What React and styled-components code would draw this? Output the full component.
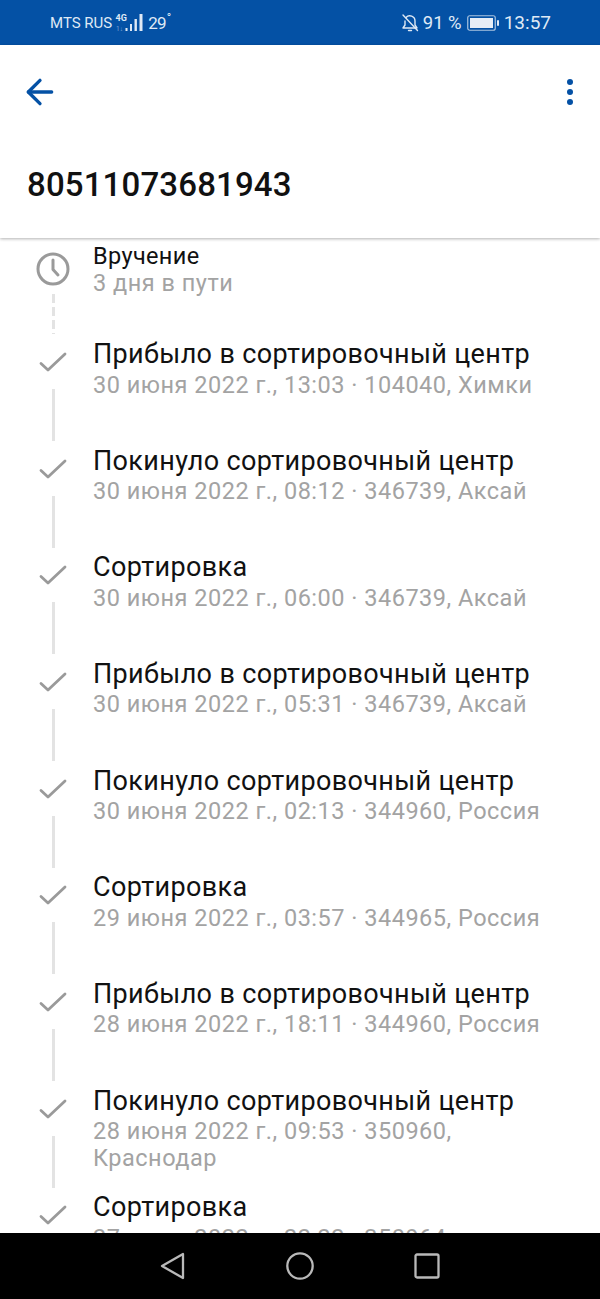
import React from "react";
import styled, { createGlobalStyle } from "styled-components";
import { ArrowLeft } from "lucide-react";

const GlobalStyle = createGlobalStyle`
  html, body {
    margin: 0;
    padding: 0;
    background: #fff;
    font-family: Roboto, "Liberation Sans", sans-serif;
  }
`;

const BLUE = "#0451a5";

const Screen = styled.div`
  width: 600px;
  height: 1299px;
  display: flex;
  flex-direction: column;
  overflow: hidden;
`;

const StatusBar = styled.div`
  height: 45px;
  flex: none;
  background: ${BLUE};
  color: #dfe9f5;
  display: flex;
  align-items: center;
  justify-content: space-between;
  padding: 0 49px 0 50px;
  box-sizing: border-box;
`;

const StatusGroup = styled.div`
  display: flex;
  align-items: center;
`;

const Carrier = styled.span`
  font-size: 15px;
  margin-right: 3px;
`;

const Temperature = styled.span`
  font-size: 17px;
  letter-spacing: -0.8px;
  margin-left: 3px;
  sup {
    font-size: 12px;
    line-height: 0;
    margin-left: 1px;
  }
`;

const Percent = styled.span`
  font-size: 18.5px;
  margin: 0 5px 0 4px;
`;

const Clock = styled.span`
  font-size: 19px;
  margin-left: 5px;
`;

const Header = styled.header`
  height: 193px;
  flex: none;
  background: #fff;
  box-shadow: 0 1px 3px rgba(0, 0, 0, 0.3);
  position: relative;
  z-index: 1;
  box-sizing: border-box;
  padding: 27px 27px 0 20px;
`;

const HeaderTools = styled.div`
  display: flex;
  align-items: center;
  justify-content: space-between;
  color: ${BLUE};
`;

const Dots = styled.div`
  display: flex;
  flex-direction: column;
  gap: 3.5px;
  span {
    width: 6.5px;
    height: 6.5px;
    border-radius: 50%;
    background: ${BLUE};
  }
`;

const TrackNumber = styled.h1`
  margin: 53px 0 0 7px;
  font-size: 33px;
  line-height: 40px;
  font-weight: 500;
  letter-spacing: 0.15px;
  color: #111;
`;

const Timeline = styled.main`
  flex: 1;
  min-height: 0;
  overflow: hidden;
  background: #fff;
  padding-top: 3px;
`;

const Row = styled.div`
  display: flex;
  height: ${(p) => (p.$first ? "98px" : "106.67px")};
  padding-left: 36px;
`;

const Marker = styled.div`
  width: 34px;
  margin-right: 23px;
  flex: none;
  display: flex;
  flex-direction: column;
  align-items: center;
`;

const IconSlot = styled.div`
  margin-top: ${(p) => (p.$clock ? "12px" : "7px")};
  height: 32px;
  display: flex;
  align-items: center;
`;

const Line = styled.div`
  width: 3px;
  height: 52px;
  margin-top: 11px;
  background: #e3e3e3;
`;

const DashedLine = styled.div`
  width: 3px;
  height: 40px;
  margin-top: 9px;
  background: repeating-linear-gradient(
    to bottom,
    #e3e3e3 0,
    #e3e3e3 9px,
    transparent 9px,
    transparent 13px
  );
`;

const Texts = styled.div`
  min-width: 0;
  flex: 1;
  padding-right: 40px;
`;

const Title = styled.div`
  font-size: ${(p) => (p.$small ? "23.5px" : "27px")};
  line-height: 30px;
  letter-spacing: 0.35px;
  color: #111;
  white-space: nowrap;
`;

const Subtitle = styled.div`
  font-size: 23.5px;
  line-height: 27px;
  letter-spacing: 0.5px;
  color: #a3a3a3;
  margin-top: ${(p) => (p.$tight ? "-1px" : "2.5px")};
`;

const NavBar = styled.nav`
  height: 66px;
  flex: none;
  background: #000;
  display: flex;
  align-items: center;
  justify-content: center;
  gap: 100px;
  position: relative;
  z-index: 2;
`;

const steps = [
  { title: "Прибыло в сортировочный центр", sub: "30 июня 2022 г., 13:03 · 104040, Химки" },
  { title: "Покинуло сортировочный центр", sub: "30 июня 2022 г., 08:12 · 346739, Аксай" },
  { title: "Сортировка", sub: "30 июня 2022 г., 06:00 · 346739, Аксай" },
  { title: "Прибыло в сортировочный центр", sub: "30 июня 2022 г., 05:31 · 346739, Аксай" },
  { title: "Покинуло сортировочный центр", sub: "30 июня 2022 г., 02:13 · 344960, Россия" },
  { title: "Сортировка", sub: "29 июня 2022 г., 03:57 · 344965, Россия" },
  { title: "Прибыло в сортировочный центр", sub: "28 июня 2022 г., 18:11 · 344960, Россия" },
  { title: "Покинуло сортировочный центр", sub: "28 июня 2022 г., 09:53 · 350960, Краснодар" },
  { title: "Сортировка", sub: "27 июня 2022 г., 22:22 · 350964, Краснодар" },
];

const CheckIcon = () => (
  <svg width="30" height="22" viewBox="0 0 30 22" fill="none">
    <path d="M3 12.5 L10 19 L27 3" stroke="#9a9a9a" strokeWidth="2.8" strokeLinecap="round" strokeLinejoin="round" />
  </svg>
);

const ClockIcon = () => (
  <svg width="34" height="34" viewBox="0 0 34 34" fill="none">
    <circle cx="17" cy="17" r="15" stroke="#9a9a9a" strokeWidth="3" />
    <path d="M17 8 V17.5 L22 23" stroke="#9a9a9a" strokeWidth="3" strokeLinecap="round" strokeLinejoin="round" />
  </svg>
);

const SignalIcon = () => (
  <svg width="30" height="20" viewBox="0 0 30 20" fill="none">
    <text x="0.5" y="7.5" fontSize="9" fontWeight="700" fontFamily="Roboto, sans-serif" fill="#dfe9f5">4G</text>
    <text x="1" y="18" fontSize="6.5" fontFamily="Roboto, sans-serif" fill="#7fa6d2">1↓</text>
    <rect x="10.5" y="15" width="2" height="3" fill="#dfe9f5" />
    <rect x="15" y="11" width="2" height="7" fill="#dfe9f5" />
    <rect x="19.5" y="6" width="2.4" height="12" fill="#dfe9f5" />
    <rect x="24.5" y="1" width="3" height="17" fill="#dfe9f5" />
  </svg>
);

const BellOffIcon = () => (
  <svg width="18" height="20" viewBox="0 0 18 20" fill="none" stroke="#dfe9f5" strokeWidth="1.4" strokeLinecap="round" strokeLinejoin="round">
    <path d="M5 4.5 A5.2 5.2 0 0 1 14 8 V12 L16 15 H2 L4 12 V8" />
    <path d="M7.5 17.5 H10.5" />
    <path d="M2 2 L16.5 17.5" />
  </svg>
);

const BatteryIcon = () => (
  <svg width="32" height="16" viewBox="0 0 32 16" fill="none">
    <rect x="0.75" y="0.75" width="27.5" height="14.5" rx="2" stroke="#a9c3e0" strokeWidth="1.2" />
    <rect x="3" y="3" width="23" height="10" fill="#e6edf6" />
    <rect x="30" y="5" width="2" height="6" rx="1" fill="#dfe9f5" />
  </svg>
);

const HomeIcon = () => (
  <svg width="28" height="28" viewBox="0 0 28 28" fill="none">
    <circle cx="14" cy="14" r="12.7" stroke="#b9b9b9" strokeWidth="2.3" />
  </svg>
);

const SquareIcon = () => (
  <svg width="26" height="26" viewBox="0 0 26 26" fill="none">
    <rect x="1.5" y="1.5" width="23" height="23" rx="1.5" stroke="#b9b9b9" strokeWidth="2.3" />
  </svg>
);

const NavBack = () => (
  <svg width="26" height="28" viewBox="0 0 26 28" fill="none">
    <path d="M23 2 V26 L2 14 Z" stroke="#b9b9b9" strokeWidth="2.3" strokeLinejoin="round" />
  </svg>
);

export default function App() {
  return (
    <Screen>
      <GlobalStyle />
      <StatusBar>
        <StatusGroup>
          <Carrier>MTS RUS</Carrier>
          <SignalIcon />
          <Temperature>
            29<sup>°</sup>
          </Temperature>
        </StatusGroup>
        <StatusGroup>
          <BellOffIcon />
          <Percent>91 %</Percent>
          <BatteryIcon />
          <Clock>13:57</Clock>
        </StatusGroup>
      </StatusBar>

      <Header>
        <HeaderTools>
          <ArrowLeft size={40} strokeWidth={2} />
          <Dots>
            <span />
            <span />
            <span />
          </Dots>
        </HeaderTools>
        <TrackNumber>80511073681943</TrackNumber>
      </Header>

      <Timeline>
        <Row $first>
          <Marker>
            <IconSlot $clock>
              <ClockIcon />
            </IconSlot>
            <DashedLine />
          </Marker>
          <Texts>
            <Title $small>Вручение</Title>
            <Subtitle $tight>3 дня в пути</Subtitle>
          </Texts>
        </Row>
        {steps.map((step, i) => (
          <Row key={i}>
            <Marker>
              <IconSlot>
                <CheckIcon />
              </IconSlot>
              <Line />
            </Marker>
            <Texts>
              <Title>{step.title}</Title>
              <Subtitle>{step.sub}</Subtitle>
            </Texts>
          </Row>
        ))}
      </Timeline>

      <NavBar>
        <NavBack />
        <HomeIcon />
        <SquareIcon />
      </NavBar>
    </Screen>
  );
}
